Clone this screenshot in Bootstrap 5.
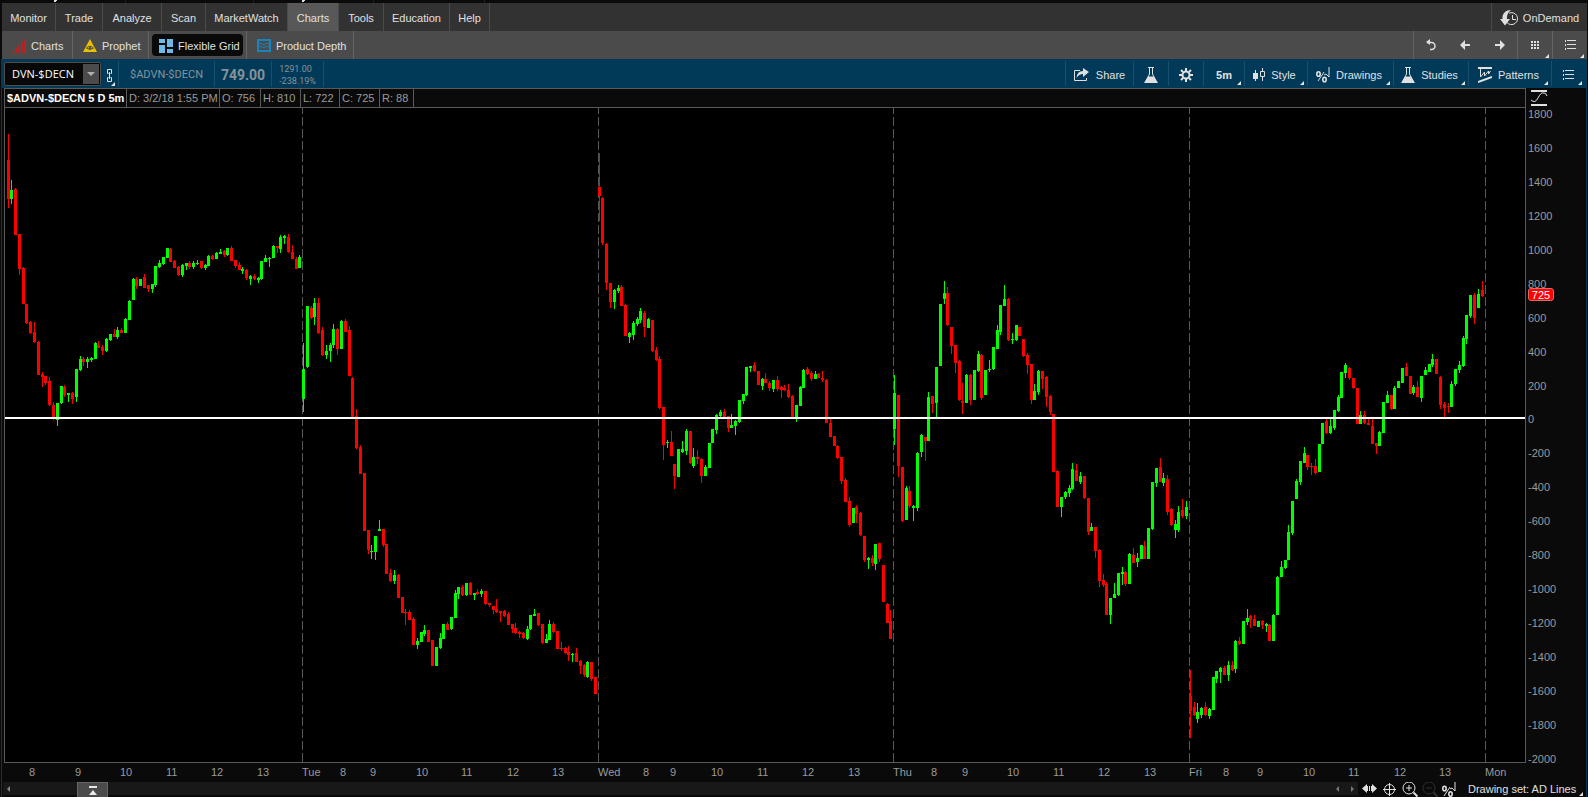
<!DOCTYPE html>
<html lang="en">
<head>
<meta charset="utf-8">
<meta name="viewport" content="width=device-width, initial-scale=1">
<title>Charts - Flexible Grid</title>
<link href="https://cdn.jsdelivr.net/npm/bootstrap@5.3.0/dist/css/bootstrap.min.css" rel="stylesheet">
<style>
  :root { --ink:#e0e0e0; --dim:#9a9a9a; --line:#5a5a5a; --blue:#003a58; --shell:#0a0a0a; }
  body { font-family:"Liberation Sans",Arial,sans-serif; font-size:11px; line-height:14px; color:var(--ink); background:var(--shell); }
  button, input { font:inherit; color:inherit; background:none; border:0; padding:0; }
  a { color:inherit; text-decoration:none; }
  svg { display:block; flex:none; }
  .top-strip { height:3px; }
  .menu-bar, .tab-bar { height:28px; margin:0 1px 0 2px; }
  .menu-bar { background:#323232; }
  .menu-items { display:grid; grid-template-columns:54px 47px 59px 44px 82px 51px 45px 66px 40px; }
  .menu-items a { border-right:1px solid #4a4a4a; }
  .menu-items a, .cell { display:flex; align-items:center; justify-content:center; white-space:nowrap; position:relative; }
  .menu-items a { padding-top:2px; }
  .menu-items a.active { background:#585858; }
  .ondemand { width:96px; border-left:1px solid #4a4a4a; gap:4px; padding-top:2px; }
  .tab-bar { background:#4b4b4b; }
  .tab-bar .tabs { display:grid; grid-template-columns:71px 76px 98px 107px; }
  .tab-bar .tabs > div { border-right:1px solid #646464; padding:3px; }
  .tab-bar .tabs button { display:flex; align-items:center; gap:5px; width:100%; height:22px; padding:1px 0 0 7px; border-radius:4px; white-space:nowrap; }
  .tab-bar .tabs button.active { background:#0a0a0a; width:91px; }
  .tools { display:grid; grid-template-columns:34px 34px 35px 35px 35px; border-left:1px solid #646464; }
  .tools .cell:nth-child(n+4) { border-left:1px solid #646464; }
  .quote-bar { height:29px; background:var(--blue); margin-left:1px; margin-right:1px; padding-right:2px; }
  .quote-bar .cell { border-left:1px solid #17506e; margin:2px 0; padding-top:2px; }
  .quote-left { display:grid; grid-template-columns:99px 18px 96px 57px 52px 1px; font-family:Roboto,sans-serif; color:#87929a; }
  .quote-left .cell.link-cell { border:0; }
  .symbol-box { height:24px; width:97px; margin:3px 0 0 3px; background:#080808; border:1px solid #4d4d4d; border-radius:2px; }
  .symbol-box input { width:77px; padding-left:7px; font-family:"Open Sans",sans-serif; color:#fff; flex:none; }
  .symbol-box button { margin:1px; background:#4b4b4b; }
  .last-price { font-size:14px; font-weight:700; }
  .change-cell { font-size:9px; line-height:12px; }
  .quote-tools { display:grid; grid-template-columns:68px 35px 35px 41px 63px 86px 75px 83px 34px; }
  .quote-tools .cell { gap:6px; }
  .more::after { content:""; position:absolute; right:3px; bottom:1px; border-left:4px solid transparent; border-bottom:4px solid #e4e4e4; }
  .cell.pe { padding-right:3px; }
  .workspace { border-left:1px solid var(--blue); border-right:1px solid var(--blue); margin:0 1px; min-height:0; }
  .plot-col { margin-left:2px; min-width:0; }
  .bar-info { height:20px; border:1px solid var(--line); color:var(--dim); grid-template-columns:122px 93px 41px 40px 39px 40px 34px; display:grid; }
  .bar-info span { border-right:1px solid var(--line); padding:2px 0 0 2px; white-space:nowrap; }
  .bar-info .title { color:#fff; font-weight:700; }
  .plot { background:#000; border:solid var(--line); border-width:0 1px 1px; min-height:0; }
  .time-axis { height:19px; color:var(--dim); padding:2px 0 0 1px; overflow:hidden; }
  .time-axis span { white-space:nowrap; flex:none; overflow:visible; }
  .price-axis { width:60px; padding-bottom:16px; color:var(--dim); }
  .price-axis ol { list-style:none; margin:0; padding:0 0 0 2px; position:relative; }
  .price-tag { position:absolute; left:2px; background:#f00; color:#fff; border:1px solid #d66; border-radius:3px; width:26px; height:13px; line-height:12px; text-align:center; }
  .foot { height:15px; margin:0 1px; border:solid var(--blue); border-width:0 1px; }
  .track { background:#181818; height:13px; margin-left:1px; }
  .track button { display:flex; align-items:center; }
  .thumb { width:31px; height:15px; background:#4b4b4b; border:1px solid #666; border-bottom:0; justify-content:center; }
  .foot-icons { width:110px; }
  .foot-icons button { width:20px; display:flex; align-items:flex-start; }
  .foot-set { width:118px; height:15px; position:relative; text-align:left; white-space:nowrap; padding-bottom:2px; }
</style>
</head>
<body>
<div class="vh-100 d-flex flex-column overflow-hidden">
  <div class="top-strip">
    <svg width="500" height="3"><path d="M125 0h1v3h-1zM253 0h1v3h-1zM373 0h1v3h-1zM484 0h1v3h-1z" fill="#222"/><path d="M54 0h3v1h-1v1h-2zM302 0h3v1h-1v1h-2z" fill="#ddd"/></svg>
  </div>

  <nav class="menu-bar d-flex justify-content-between" aria-label="Main">
    <div class="menu-items">
      <a href="#">Monitor</a><a href="#">Trade</a><a href="#">Analyze</a><a href="#">Scan</a><a href="#">MarketWatch</a><a href="#" class="active">Charts</a><a href="#">Tools</a><a href="#">Education</a><a href="#">Help</a>
    </div>
    <button class="ondemand cell">
      <svg width="19" height="17" viewBox="0 0 19 17" fill="none" stroke="#e0e0e0"><path d="M9 3.200A6 6 0 1 1 7 12.500M12.500 5v4.500h3.500"/><path d="M11 0C5 0 2 4 2.500 9H0l5 6.500L10 9H7C6.500 5.500 8 2 11 0z" fill="#e0e0e0" stroke="none"/></svg>
      OnDemand
    </button>
  </nav>

  <div class="tab-bar d-flex justify-content-between">
    <div class="tabs">
      <div><button><svg width="14" height="14" fill="#b32424"><path d="M0 12h2v2H0zM3 9h2v5H3zM6 6h2v8H6zM9 3h2v11H9zM12 0h2v14h-2z"/></svg>Charts</button></div>
      <div><button><svg width="14" height="13" viewBox="0 0 14 13"><path d="M7 0l7 13H0z" fill="#e8c000"/><path d="M3.500 9Q7 5.500 10.500 9 7 12 3.500 9z" fill="none" stroke="#4b4b4b"/><circle cx="7" cy="9" r="1.200" fill="#4b4b4b"/></svg>Prophet</button></div>
      <div><button class="active"><svg width="14" height="14" fill="#6db9e8"><path d="M0 0h6v4H0zM8 0h6v8H8zM0 6h6v8H0zM8 10h6v4H8z"/></svg>Flexible Grid</button></div>
      <div><button><svg width="14" height="13" viewBox="0 0 14 13" fill="none" stroke="#1784bd"><path d="M1 1h12v11H1z" stroke-width="2"/><path d="M2 4l3 1 2 1 3-2 2 1M2 7l3 1 2 1 3-2 2 1"/></svg>Product Depth</button></div>
    </div>
    <div class="tools">
      <button class="cell" aria-label="Undo"><svg width="10" height="12" fill="none" stroke="#e0e0e0" stroke-width="1.500"><path d="M1 3.500h4.500a3.500 3.500 0 0 1 0 7H4"/><path d="M4 0v6L0 3z" fill="#e0e0e0" stroke="none"/></svg></button>
      <button class="cell" aria-label="Back"><svg width="10" height="10" fill="#e0e0e0"><path d="M5 0v4h5v2H5v4L0 5z"/></svg></button>
      <button class="cell" aria-label="Forward"><svg width="10" height="10" fill="#e0e0e0"><path d="M5 0v4H0v2h5v4l5-5z"/></svg></button>
      <button class="cell more" aria-label="Grid"><svg width="8" height="8" fill="#e0e0e0"><path d="M0 0h2v2H0zM3 0h2v2H3zM6 0h2v2H6zM0 3h2v2H0zM3 3h2v2H3zM6 3h2v2H6zM0 6h2v2H0zM3 6h2v2H3zM6 6h2v2H6z"/></svg></button>
      <button class="cell more" aria-label="Menu"><svg width="11" height="10" fill="#e0e0e0"><path d="M0 0h1v2H0zM2 0h9v1H2zM0 4h1v2H0zM2 4h9v1H2zM0 8h1v2H0zM2 8h9v1H2z"/></svg></button>
    </div>
  </div>

  <div class="quote-bar d-flex justify-content-between">
    <div class="quote-left">
      <div class="symbol-box d-flex">
        <input type="text" value="DVN-$DECN" aria-label="Symbol">
        <button aria-label="Symbol list" class="d-flex align-items-center justify-content-center flex-grow-1"><svg width="8" height="4" fill="#b0b0b0"><path d="M0 0h8L4 4z"/></svg></button>
      </div>
      <button class="cell link-cell more" aria-label="Link"><svg width="7" height="13" fill="none" stroke="#e0e0e0"><path d="M2.500 4.500h-1v-4h4v4h-1M2.500 8.500h-1v4h4v-4h-1M3.500 3v7"/></svg></button>
      <div class="cell">$ADVN-$DECN</div>
      <div class="cell last-price">749.00</div>
      <div class="cell change-cell"><div>1291.00<br>-238.19%</div></div>
      <div class="cell"></div>
    </div>
    <div class="quote-tools">
      <button class="cell"><svg width="16" height="14" fill="none" stroke="#e0e0e0"><path d="M6 2.500H.5v10h12V10"/><path d="M9 0l6 4-6 5V6Q5 6 2.500 10 3 3 9 3z" fill="#e0e0e0" stroke="none"/></svg>Share</button>
      <button class="cell" aria-label="Edit studies"><svg width="14" height="16" fill="none" stroke="#e0e0e0"><path d="M4 .5h6M5.500 1v6L1.500 15M8.500 1v6l4 8"/><path d="M4 9.500h6l4 6.500H0z" fill="#e0e0e0" stroke="none"/></svg></button>
      <button class="cell" aria-label="Settings"><svg width="14" height="14" viewBox="-7 -7 14 14" stroke="#e0e0e0" fill="none"><circle r="3.500" stroke-width="2"/><path stroke-width="2" d="M0-7v3M0 7V4M-7 0h3M7 0H4M-5-5l2 2M5 5L3 3M-5 5l2-2M5-5L3-3"/></svg></button>
      <button class="cell more fw-bold">5m</button>
      <button class="cell more pe"><svg width="12" height="14" fill="none" stroke="#e0e0e0"><path d="M2.500 2v11M9.500 0v3M9.500 9v4M7.500 3.500h4v5h-4z"/><path d="M0 5h5v6H0z" fill="#e0e0e0" stroke="none"/></svg>Style</button>
      <button class="cell more pe"><svg width="14" height="16" fill="none" stroke="#e0e0e0"><ellipse cx="2.500" cy="7" rx="1.700" ry="2.300" stroke-width="1.600"/><ellipse cx="8.500" cy="12.500" rx="1.700" ry="2.300" stroke-width="1.600"/><path d="M2 14l6-9M8 8l2-1 3 3V0"/></svg>Drawings</button>
      <button class="cell more pe"><svg width="14" height="16" fill="none" stroke="#e0e0e0"><path d="M4 .5h6M5.500 1v6L1.500 15M8.500 1v6l4 8"/><path d="M4 9.500h6l4 6.500H0z" fill="#e0e0e0" stroke="none"/></svg>Studies</button>
      <button class="cell more pe"><svg width="14" height="16" fill="none" stroke="#e0e0e0"><path d="M0 1h14" stroke-width="2"/><path d="M2.500 2v8l4-5v4l4-5v3l2-3"/><path d="M0 15l14-5" stroke-width="2"/></svg>Patterns</button>
      <button class="cell more" aria-label="Chart menu"><svg width="11" height="10" fill="#e0e0e0"><path d="M0 0h1v2H0zM2 0h9v1H2zM0 4h1v2H0zM2 4h9v1H2zM0 8h1v2H0zM2 8h9v1H2z"/></svg></button>
    </div>
  </div>

  <main class="workspace d-flex flex-grow-1">
    <section class="plot-col d-flex flex-column flex-grow-1">
      <div class="bar-info"><span class="title">$ADVN-$DECN 5 D 5m</span><span>D: 3/2/18 1:55 PM</span><span>O: 756</span><span>H: 810</span><span>L: 722</span><span>C: 725</span><span>R: 88</span></div>
      <div class="plot flex-grow-1"><svg id="plot" width="100%" height="100%" viewBox="0 0 1520 654" preserveAspectRatio="none" shape-rendering="crispEdges" role="img" aria-label="Five day candlestick chart"></svg></div>
      <div class="time-axis d-flex" id="timeAxis"></div>
    </section>
    <aside class="price-axis d-flex flex-column">
      <button class="d-flex align-items-center ps-1" style="height:19px" aria-label="Fit price axis"><svg width="18" height="16" fill="none" stroke="#e0e0e0"><path d="M1 1h16M1 15h16" stroke-width="2"/><path d="M1 10q4 4 7-2t5-5q3-1 4 3"/></svg></button>
      <ol class="flex-grow-1 d-flex flex-column justify-content-between" id="priceAxis"></ol>
    </aside>
  </main>

  <footer class="foot d-flex">
    <div class="track d-flex flex-grow-1">
      <button aria-label="Scroll to start" style="width:74px" class="ps-1"><svg width="3" height="6" fill="#888"><path d="M3 0v6L0 3z"/></svg></button>
      <button class="thumb" aria-label="Expand"><svg width="10" height="9" fill="#e8e8e8"><path d="M1 0h8v2H1zM5 4l4 5H1z"/></svg></button>
      <button aria-label="Scroll left" class="ms-auto me-2 pe-1"><svg width="3" height="6" fill="#777"><path d="M3 0v6L0 3z"/></svg></button>
      <button aria-label="Scroll right" class="me-1"><svg width="3" height="6" fill="#777"><path d="M0 0v6l3-3z"/></svg></button>
    </div>
    <div class="foot-icons d-flex ps-1">
      <button aria-label="Pan"><svg width="15" height="15" fill="#e0e0e0"><path d="M5 2v9L0 6.500zM10 2v9l5-4.500zM5 4h1v5H5zM7 4h1v5H7zM9 4h1v5H9z"/></svg></button>
      <button aria-label="Crosshair"><svg width="15" height="15" fill="none" stroke="#e0e0e0"><circle cx="7.500" cy="7.500" r="5"/><path d="M1 7.500h13M7.500 1v13"/></svg></button>
      <button aria-label="Zoom in"><svg width="17" height="15" fill="none" stroke="#e0e0e0"><circle cx="7" cy="6" r="6"/><path d="M4 6h6M7 3v6"/><path d="M11.500 10.500l4 4" stroke-width="2"/></svg></button>
      <button aria-label="Zoom out" disabled><svg width="17" height="15" fill="none" stroke="#303030"><circle cx="7" cy="6" r="6"/><path d="M4 6h6"/><path d="M11.500 10.500l4 4" stroke-width="2"/></svg></button>
      <button aria-label="Drawings"><svg width="14" height="15" fill="none" stroke="#e0e0e0"><ellipse cx="2.500" cy="6.500" rx="1.700" ry="2.300" stroke-width="1.600"/><ellipse cx="8.500" cy="12" rx="1.700" ry="2.300" stroke-width="1.600"/><path d="M2 14l6-9M8 7l2-1 3 3V0"/></svg></button>
    </div>
    <button class="foot-set more">Drawing set: AD Lines</button>
  </footer>
</div>
<script>
// Each session: plot offset, then one bar per 5 minutes as
// direction, high, body top, body bottom, low (three units per plot unit).
const sessions = [
[2, `r 72 150 267 293,g 210 240 267 282,r 234 237 375 375,r 372 372 477 495,r 471 474 582 582,r 582 582 639 642,r 633 636 669 672,r 636 666 696 699,r 693 696 795 795,r 786 792 801 831,r 798 798 819 825,r 801 813 885 888,r 876 885 924 930,g 879 879 930 948,g 828 828 879 882,r 825 831 855 861,g 849 849 855 876,r 846 849 867 882,g 777 777 861 876,g 738 747 780 783,r 741 747 756 768,g 741 747 756 774,g 741 744 750 756,g 696 699 747 747,r 693 705 714 714,r 705 711 723 735,g 684 687 723 726,g 672 672 690 693,r 657 672 681 681,g 651 660 681 687,r 654 660 669 669,g 624 627 669 669,g 570 573 630 630,g 504 507 570 570,r 501 507 528 537,g 507 507 528 528,r 492 501 534 534,r 525 525 537 546,g 522 522 537 549,g 468 468 525 531,g 450 459 471 474,g 441 441 462 465,g 414 414 444 444,r 414 417 456 456,r 450 453 474 474,r 468 471 495 498,g 462 465 495 501,g 459 459 468 480,r 453 459 471 477,g 453 459 471 477,g 450 459 462 465,r 453 453 474 477,g 462 465 474 480,g 435 438 468 468,r 435 438 447 450,g 426 429 447 447,g 417 426 432 432,r 420 423 435 441,g 414 414 435 438,r 408 414 453 453,r 450 450 468 474,r 456 465 480 480,g 471 477 483 492,r 477 480 504 510,g 495 498 507 525,r 492 498 507 510,g 501 504 510 519,g 453 453 507 510,g 435 444 456 456,g 441 444 447 471,g 405 408 444 444,r 408 408 414 429,g 375 381 417 429,g 375 378 384 402,r 372 381 426 429,r 405 426 447 447,r 441 447 477 477,g 435 441 474 474`],
[162, `g 219 297 387 426,g 108 108 291 294,r 108 114 144 147,g 84 99 141 165,r 84 99 189 192,r 171 180 255 258,g 225 243 255 267,g 219 225 243 276,g 162 177 225 234,r 174 177 237 255,g 150 153 237 237,r 147 153 186 186,r 168 180 318 318,r 321 324 444 444,r 417 438 534 537,r 525 531 612 612,r 609 609 783 783,r 780 780 840 852,g 825 843 846 867,g 798 798 846 870,g 750 777 783 783,r 777 777 825 831,r 822 822 912 912,r 897 909 933 936,g 900 915 933 942,r 912 915 984 984,r 981 981 1029 1029,r 1017 1026 1029 1065,r 1020 1026 1050 1050,r 1041 1047 1125 1125,g 1104 1113 1125 1137,g 1086 1086 1116 1116,g 1065 1080 1092 1098,r 1080 1080 1116 1116,r 1110 1110 1188 1188,g 1131 1131 1188 1188,g 1089 1104 1134 1137,g 1062 1062 1107 1107,r 1056 1062 1080 1080,g 1041 1041 1077 1080,g 960 969 1044 1044,g 951 951 972 987,r 945 951 975 978,g 939 939 975 978,r 936 939 975 975,g 969 969 975 990,r 957 966 972 975,g 957 963 972 981,r 963 963 1002 1005,r 999 999 1005 1011,r 1008 1008 1020 1032,r 987 1017 1026 1029,r 1023 1023 1029 1056,r 1020 1023 1038 1041,r 1026 1032 1065 1065,r 1062 1062 1077 1089,r 1059 1074 1089 1092,r 1083 1086 1092 1104,r 1086 1089 1104 1107,g 1068 1077 1107 1110,g 1035 1035 1077 1080,g 1017 1032 1038 1038,r 1029 1029 1065 1068,r 1062 1062 1119 1122,g 1092 1107 1119 1119,g 1050 1062 1110 1110,r 1056 1062 1086 1089,r 1083 1083 1137 1137,r 1116 1134 1137 1143,r 1131 1134 1149 1152,r 1128 1146 1155 1173,g 1149 1152 1155 1176,r 1134 1149 1176 1176,r 1170 1173 1188 1212,r 1182 1185 1215 1221,g 1173 1176 1221 1224,r 1176 1176 1227 1233,r 1221 1221 1272 1272`],
[32, `r 39 141 168 243,r 171 174 309 315,r 309 312 429 450,r 429 429 486 504,g 447 450 486 507,g 435 444 453 459,r 435 441 498 498,r 492 495 588 588,g 576 579 591 609,g 543 549 585 600,g 531 537 552 558,g 504 513 540 549,r 513 519 561 591,g 534 537 564 564,r 540 540 633 636,r 621 630 660 663,r 648 657 804 807,r 801 801 915 960,g 900 906 909 924,r 873 906 948 948,r 972 972 1008 1047,g 927 927 1011 1011,g 903 927 936 939,g 867 873 933 945,r 873 873 969 972,g 924 951 978 984,r 930 951 957 972,r 954 957 1008 1029,g 975 981 1008 1008,g 909 909 984 984,g 867 867 909 909,g 822 825 870 882,g 810 816 828 834,r 807 816 834 834,r 828 828 864 876,g 822 855 864 864,g 840 843 858 885,g 780 780 846 849,g 762 762 783 792,g 681 681 765 768,g 678 678 684 696,r 666 675 693 696,r 693 693 735 735,g 714 717 738 750,r 699 717 729 729,r 723 729 744 753,g 720 720 747 756,r 708 720 747 753,r 738 741 750 774,r 735 744 750 753,r 732 750 771 774,r 765 768 834 834,g 795 795 834 846,g 738 741 798 798,g 687 690 744 744,r 681 687 702 705,r 693 699 717 723,g 693 702 717 717,r 699 702 714 714,r 693 714 720 726,r 717 720 849 849,r 837 849 891 891,r 888 888 918 918,r 915 918 954 957,r 951 951 1023 1032,r 1014 1020 1086 1086,r 1071 1083 1155 1161,g 1104 1104 1149 1149,r 1095 1101 1122 1149,r 1116 1119 1185 1188,r 1188 1188 1260 1266,g 1251 1254 1260 1287,r 1245 1254 1269 1278,g 1212 1212 1272 1290,r 1209 1209 1257 1266,r 1275 1275 1386 1386,r 1389 1392 1449 1449,r 1410 1443 1497 1497`],
[162, `g 315 369 477 525,r 375 375 588 621,r 591 591 753 756,g 648 654 750 750,r 648 663 708 714,g 705 708 714 753,g 546 549 714 723,g 492 495 546 561,r 501 501 513 573,g 366 381 513 513,r 378 378 402 429,g 291 291 399 444,g 102 102 288 288,g 33 69 87 102,r 51 69 165 168,r 171 171 228 252,r 225 225 279 309,r 270 273 390 393,r 339 393 399 432,g 312 315 399 399,r 312 315 390 405,g 300 300 390 390,g 243 252 303 306,r 252 255 384 390,g 300 300 375 375,g 270 297 300 306,g 231 231 297 300,g 165 180 237 237,g 105 105 186 195,g 45 87 108 108,r 84 87 210 213,g 189 207 210 222,g 165 165 210 213,r 171 171 198 198,r 207 207 258 261,r 249 255 285 312,r 282 282 390 402,g 342 363 390 390,g 300 303 366 375,r 303 303 327 357,r 318 321 381 411,r 375 378 426 435,r 432 432 606 606,r 600 603 711 711,g 681 681 711 741,g 663 666 681 687,g 645 654 669 681,g 579 597 657 660,r 582 600 633 633,g 606 618 636 642,r 618 618 684 687,r 684 684 786 795,g 759 771 783 783,r 771 771 843 864,r 837 840 933 951,r 912 930 945 951,r 936 942 1035 1035,g 984 984 1035 1062,g 939 972 984 984,g 909 909 975 978,g 891 906 912 945,r 903 906 942 948,g 849 852 942 942,r 834 855 879 879,g 849 864 876 891,g 825 825 867 867,r 813 828 867 867,g 774 774 867 867,g 636 636 777 780,g 594 594 639 651,r 564 591 636 636,g 609 624 639 648,r 615 627 726 735,r 714 717 765 768,g 750 762 780 804,g 708 726 780 786,r 687 720 738 744,g 693 711 738 747`],
[162, `r 1200 1278 1323 1404,r 1296 1311 1335 1338,g 1299 1326 1347 1359,g 1311 1314 1335 1344,r 1296 1311 1335 1338,g 1314 1317 1338 1347,g 1221 1221 1320 1320,g 1203 1203 1227 1239,g 1191 1194 1206 1239,r 1188 1194 1215 1215,g 1173 1185 1215 1233,r 1173 1185 1200 1203,g 1110 1113 1197 1209,r 1101 1113 1122 1125,g 1053 1053 1122 1122,g 1017 1044 1056 1065,r 1035 1038 1050 1074,r 1035 1047 1068 1068,g 1053 1053 1071 1071,r 1050 1053 1065 1077,g 1059 1062 1068 1086,r 1062 1065 1113 1113,g 1032 1035 1113 1113,g 918 921 1035 1035,g 873 891 921 921,g 870 870 894 897,g 765 786 870 870,g 693 693 789 795,g 627 633 687 687,g 573 573 636 645,g 531 549 579 579,r 555 555 591 600,r 579 588 591 615,r 567 588 609 612,g 522 522 606 606,g 459 459 522 522,r 447 453 489 492,g 447 468 489 492,g 420 420 474 480,g 375 381 423 426,g 306 306 384 384,g 279 285 309 324,r 291 294 324 330,r 324 324 354 357,r 354 354 462 462,g 423 435 462 462,r 423 435 459 462,r 447 459 465 465,r 447 468 522 522,r 519 519 528 552,g 483 486 528 528,g 396 396 489 489,g 363 375 399 399,r 375 375 417 420,g 348 354 417 417,g 333 333 354 354,g 294 294 339 339,r 279 291 318 318,r 318 318 372 372,g 345 351 369 375,r 333 351 381 381,g 318 318 384 396,g 291 300 315 315,g 282 282 306 306,g 252 267 285 291,r 267 267 312 312,r 318 321 405 417,r 396 402 414 441,r 399 408 411 429,g 333 342 411 411,g 297 297 342 348,g 273 285 300 309,g 198 204 288 291,g 135 135 207 222,g 75 75 138 144,r 69 75 144 162,g 57 72 114 114,r 33 60 78 81`]
];
const barStep = 3.7895, barsPerDay = 78;
let shapes = "";
for (const x of [297, 593, 888, 1184, 1480])
  shapes += `<line x1="${x + .5}" x2="${x + .5}" y1="0" y2="654" stroke="#585858" stroke-dasharray="9 3" stroke-dashoffset="3"/>`;
sessions.forEach(([top, text], day) => text.split(",").forEach((row, i) => {
  const [dir, ...v] = row.split(" ");
  const [hi, bt, bb, lo] = v.map(n => top + Math.round(n / 3));
  const x = 3 + Math.floor((day * barsPerDay + i) * barStep);
  const fill = dir === "g" ? "#0f0" : "#f00";
  shapes += `<path fill="${fill}" d="M${x} ${hi}h1V${lo}h-1zM${x - 1} ${bt}h3V${bb}h-3z"/>`;
}));
shapes += '<rect y="309" width="1520" height="2" fill="#fff"/>';
document.getElementById("plot").innerHTML = shapes;

// Time labels and the point of the axis where each one starts.
const ticks = [["",0],[8,24],[9,70],[10,115],[11,161],[12,206],[13,252],["Tue",297],[8,335],[9,365],[10,411],[11,456],[12,502],[13,547],["Wed",593],[8,638],[9,665],[10,706],[11,752],[12,797],[13,843],["Thu",888],[8,926],[9,957],[10,1002],[11,1048],[12,1093],[13,1139],["Fri",1184],[8,1218],[9,1252],[10,1298],[11,1343],[12,1389],[13,1434],["Mon",1480],["",1520]];
document.getElementById("timeAxis").innerHTML = ticks.slice(0, -1).map(([t, x], i) =>
  `<span style="width:${(ticks[i + 1][1] - x) / 1521 * 100}%">${t}</span>`).join("");

let prices = "";
for (let p = 1800; p >= -2000; p -= 200) prices += `<li>${p}</li>`;
document.getElementById("priceAxis").innerHTML = prices +
  `<li class="price-tag" style="top:${(1800 - 725) / 3800 * 97}%">725</li>`;
</script>
<script src="https://cdn.jsdelivr.net/npm/bootstrap@5.3.0/dist/js/bootstrap.bundle.min.js"></script>
</body>
</html>
